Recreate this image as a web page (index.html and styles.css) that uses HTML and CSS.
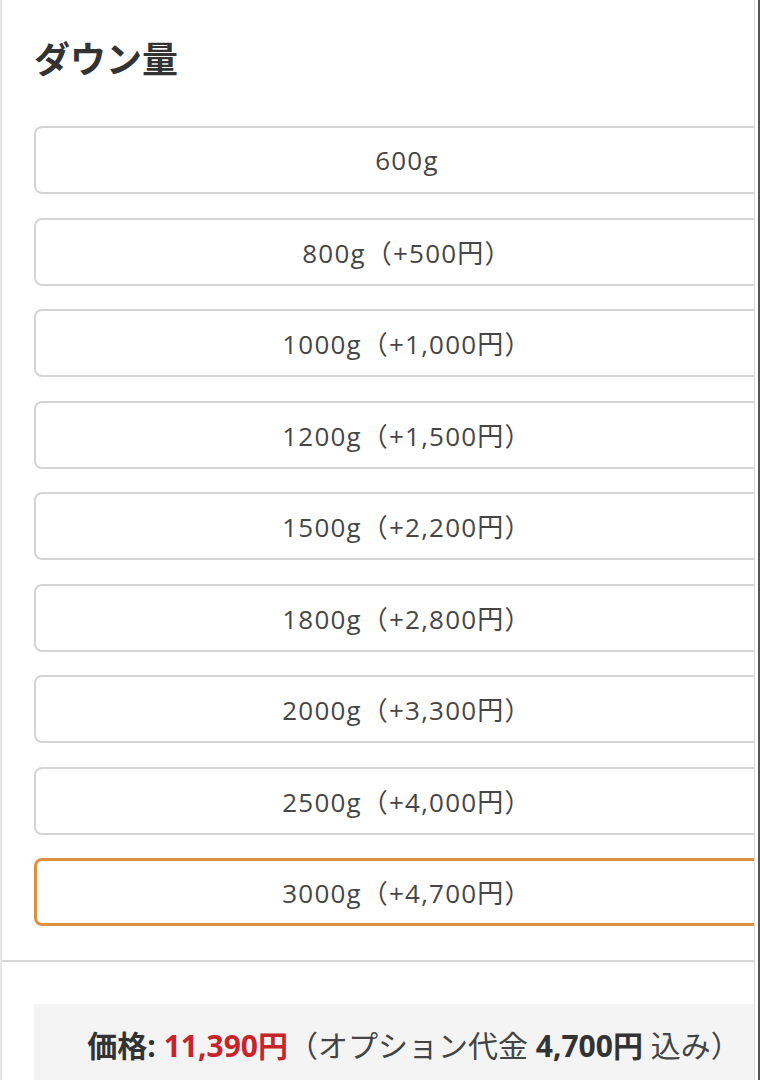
FILE: index.html
```html
<!DOCTYPE html>
<html lang="ja">
<head>
  <meta charset="UTF-8" />
  <meta name="viewport" content="width=device-width, initial-scale=1.0" />
  <title>ダウン量</title>
  <link rel="stylesheet" href="styles.css">
</head>
<body>
  <div class="frame">
    <div class="panel">
      <section class="option-group">
        <h2 class="group-title">ダウン量</h2>
        <div class="choices">
          <button class="choice">600g</button>
          <button class="choice">800g（+500円）</button>
          <button class="choice">1000g（+1,000円）</button>
          <button class="choice">1200g（+1,500円）</button>
          <button class="choice">1500g（+2,200円）</button>
          <button class="choice">1800g（+2,800円）</button>
          <button class="choice">2000g（+3,300円）</button>
          <button class="choice">2500g（+4,000円）</button>
          <button class="choice selected">3000g（+4,700円）</button>
        </div>
      </section>
      <div class="price-box">
        <p class="price-line">
          <b>価格:</b> <b class="price">11,390円</b>（オプション代金 <b>4,700円</b> 込み）
        </p>
      </div>
    </div>
  </div>
</body>
</html>
```

FILE: styles.css
```css
html, body {
  margin: 0;
  padding: 0;
  background-color: #ffffff;
}
body {
  font-family: "Open Sans", "Noto Sans CJK JP", sans-serif;
  color: #444;
}
.frame {
  width: 760px;
  height: 1080px;
  box-sizing: border-box;
  border-right: 2px solid #555;
  overflow: hidden;
}
.panel {
  width: 755px;
  height: 1080px;
  box-sizing: border-box;
  border-left: 2px solid #e6e6e6;
  border-right: 1px solid #dcdcdc;
  overflow: hidden;
}
.option-group {
  padding: 0 0 34px 32px;
  border-bottom: 2px solid #d6d6d6;
}
.group-title {
  margin: 0;
  padding: 32px 0 44px 0;
  font-family: "Noto Sans CJK JP", sans-serif;
  font-size: 36px;
  line-height: 50px;
  font-weight: bold;
  color: #333;
}
.choices {
  display: flex;
  flex-direction: column;
  gap: 23.5px;
}
/* buttons run past the panel edge, so the label sits a little right of the visible middle */
.choice {
  width: 746px;
  flex-shrink: 0;
  height: 68px;
  box-sizing: border-box;
  padding: 0;
  margin: 0;
  background: #fff;
  border: 2px solid #d4d4d4;
  border-radius: 8px;
  font-family: inherit;
  font-size: 26px;
  letter-spacing: 1.2px;
  color: #464646;
  display: flex;
  align-items: center;
  justify-content: center;
}
.choice.selected {
  border: 3px solid #e0903e;
}
.price-box {
  width: 760px;
  margin: 42px 0 0 32px;
  background-color: #f4f4f4;
  height: 120px;
  padding-top: 22px;
  box-sizing: border-box;
}
.price-line {
  margin: 0;
  text-align: center;
  font-size: 30px;
  line-height: 40px;
  color: #444;
  white-space: nowrap;
}
.price-line b {
  color: #333;
}
.price-line .price {
  color: #c8242b;
}
```
